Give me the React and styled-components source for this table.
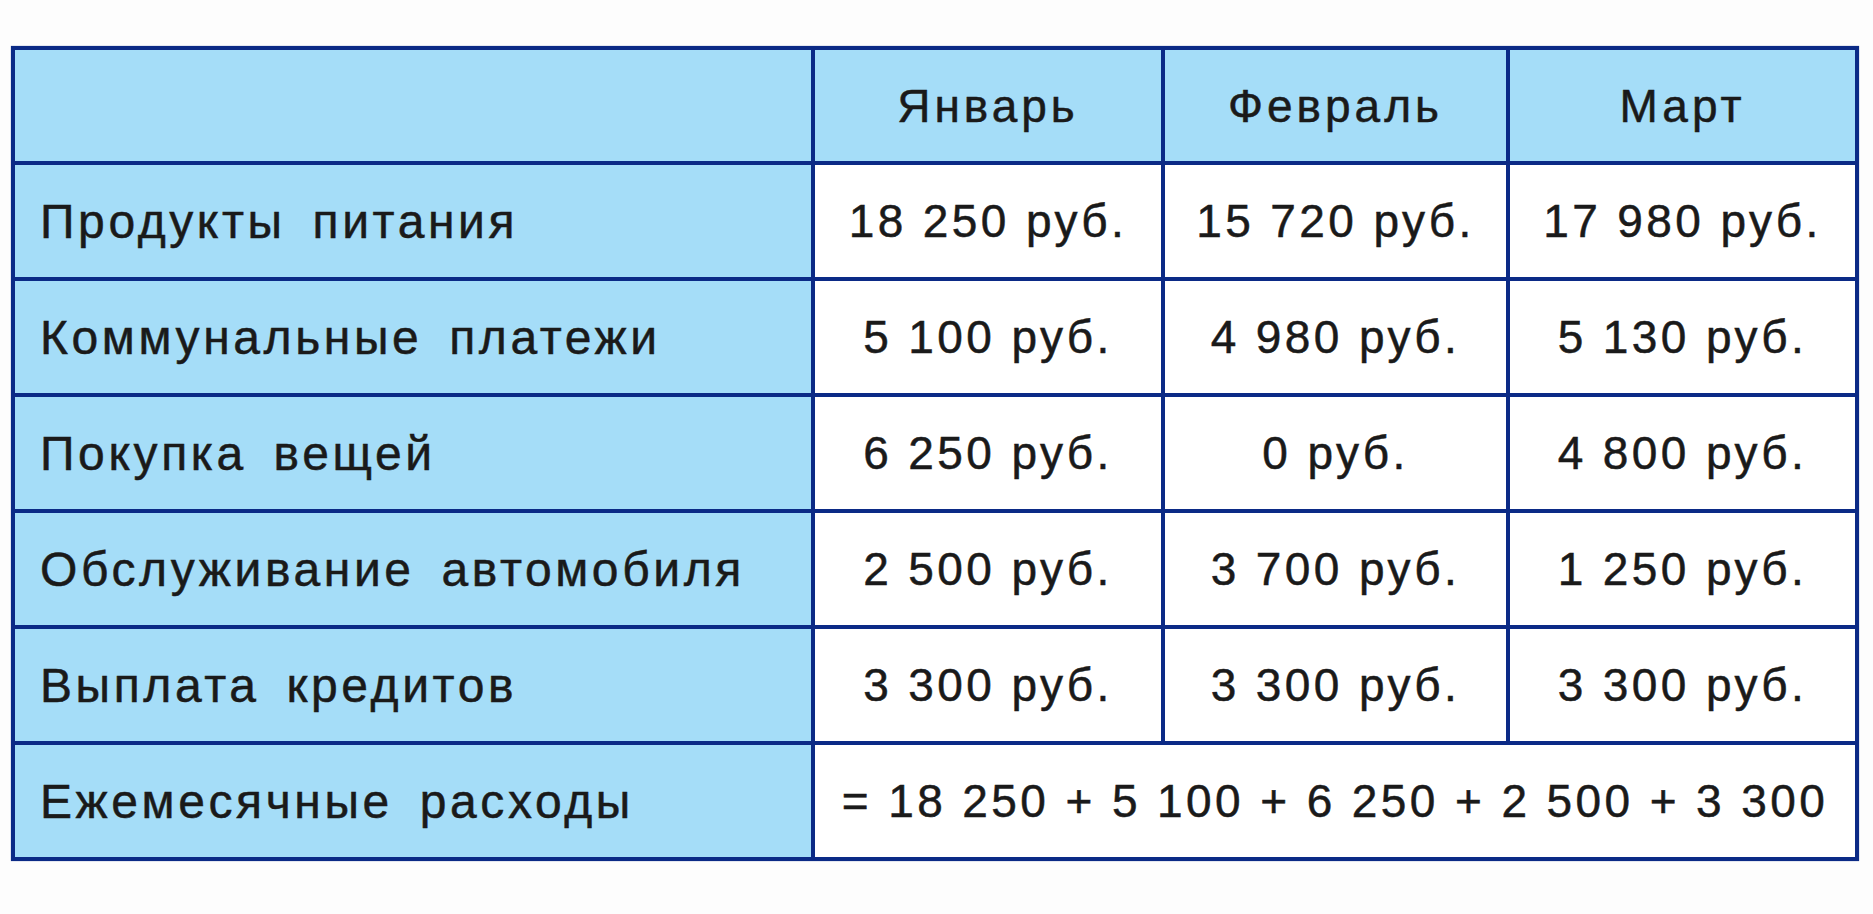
import React from 'react';
import styled, { createGlobalStyle } from 'styled-components';

const GlobalStyle = createGlobalStyle`
    html, body {
        margin: 0;
        padding: 0;
        background: #ffffff;
    }
    body {
        font-family: 'Liberation Sans', Arial, sans-serif;
    }
`;

const Page = styled.div`
    width: 1873px;
    height: 914px;
    padding: 46px 0 0 11px;
    box-sizing: border-box;
    background: #fdfdfd;
`;

const Table = styled.div`
    display: grid;
    grid-template-columns: 796px 346px 341px 345px;
    grid-template-rows: 111px repeat(6, 112px);
    gap: 4px;
    padding: 4px;
    width: max-content;
    background: #0b2a86;
    box-shadow: 0 0 1px rgba(11, 42, 134, 0.6);
`;

const Cell = styled.div`
    display: flex;
    align-items: center;
    justify-content: ${p => (p.label ? 'flex-start' : 'center')};
    padding-left: ${p => (p.label ? '25px' : '0')};
    grid-column: ${p => (p.span ? `span ${p.span}` : 'auto')};
    background: ${p => (p.blue ? '#a5ddf8' : '#ffffff')};
    color: #1a1a1a;
    font-size: ${p => (p.label ? '48px' : '46px')};
    letter-spacing: ${p => (p.label ? '3.6px' : p.head ? '4px' : '3.4px')};
    word-spacing: ${p => (p.label ? '10px' : '0')};
    -webkit-text-stroke: 0.5px #1a1a1a;
    white-space: pre;
`;

const months = ['Январь', 'Февраль', 'Март'];

const rows = [
    { name: 'Продукты питания', values: ['18 250 руб.', '15 720 руб.', '17 980 руб.'] },
    { name: 'Коммунальные платежи', values: ['5 100 руб.', '4 980 руб.', '5 130 руб.'] },
    { name: 'Покупка вещей', values: ['6 250 руб.', '0 руб.', '4 800 руб.'] },
    { name: 'Обслуживание автомобиля', values: ['2 500 руб.', '3 700 руб.', '1 250 руб.'] },
    { name: 'Выплата кредитов', values: ['3 300 руб.', '3 300 руб.', '3 300 руб.'] },
];

export default function App() {
    return (
        <>
            <GlobalStyle />
            <Page>
                <Table>
                    <Cell blue />
                    {months.map(m => (
                        <Cell blue head key={m}>{m}</Cell>
                    ))}

                    {rows.map(row => (
                        <React.Fragment key={row.name}>
                            <Cell blue label>{row.name}</Cell>
                            {row.values.map((v, i) => (
                                <Cell key={i}>{v}</Cell>
                            ))}
                        </React.Fragment>
                    ))}

                    <Cell blue label>Ежемесячные расходы</Cell>
                    <Cell span={3}>= 18 250 + 5 100 + 6 250 + 2 500 + 3 300</Cell>
                </Table>
            </Page>
        </>
    );
}
